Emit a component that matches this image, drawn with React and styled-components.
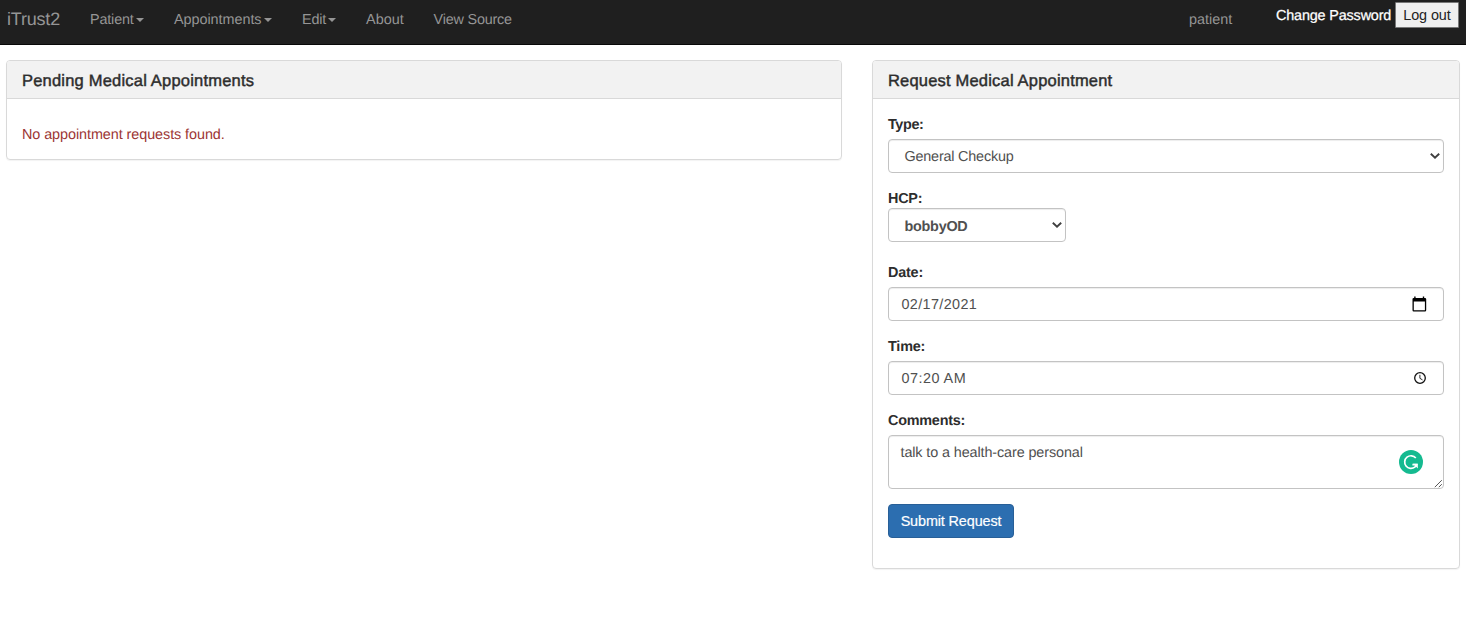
import React from "react";
import styled, { createGlobalStyle } from "styled-components";

const GlobalStyle = createGlobalStyle`
  *, *::before, *::after { box-sizing: border-box; }
  body {
    margin: 0;
    background: #fff;
    color: #2d2d2d;
    font-family: "Liberation Sans", Arial, sans-serif;
    font-size: 14.4px;
    line-height: 22px;
    overflow: hidden;
    text-rendering: geometricPrecision;
  }
`;

const Navbar = styled.nav`
  display: flex;
  align-items: flex-start;
  height: 45px;
  padding: 0 7px;
  background: #1f1f1f;
  border-bottom: 1px solid #080808;
  color: #959595;
  white-space: nowrap;
`;

const Brand = styled.a`
  width: 68px;
  padding-top: 8px;
  font-size: 18px;
  letter-spacing: ${(p) => p.$track || 0}px;
`;

const NavItem = styled.a`
  display: flex;
  align-items: center;
  width: ${(p) => p.$width}px;
  padding: 9px 0 0 15px;
  letter-spacing: ${(p) => p.$track || 0}px;
`;

const Caret = styled.i`
  margin: -1px 0 0 2px;
  border-top: 4px solid currentColor;
  border-left: 4px solid transparent;
  border-right: 4px solid transparent;
`;

const Account = styled.div`
  display: flex;
  align-items: flex-start;
  margin-left: auto;
`;

const UserName = styled.span`
  width: 87px;
  padding-top: 9px;
  letter-spacing: ${(p) => p.$track || 0}px;
`;

const PasswordLink = styled.a`
  width: 119px;
  padding-top: 5px;
  color: #fff;
  letter-spacing: ${(p) => p.$track || 0}px;
  -webkit-text-stroke: 0.25px currentColor;
`;

const LogoutButton = styled.button`
  width: 64px;
  height: 26px;
  margin-top: 2px;
  padding: 0;
  border: 1px solid #777;
  border-radius: 1px;
  background: #efefef;
  color: #222;
  font: inherit;
  letter-spacing: ${(p) => p.$track || 0}px;
`;

const Columns = styled.main`
  display: grid;
  grid-template-columns: 836px 588px;
  gap: 30px;
  align-items: start;
  padding: 15px 6px;
`;

const Panel = styled.section`
  height: ${(p) => p.$height}px;
  border: 1px solid #d9d9d9;
  border-radius: 4px;
  box-shadow: 0 1px 1px rgba(0, 0, 0, 0.05);
  overflow: hidden;
`;

const PanelTitle = styled.h3`
  height: 38px;
  margin: 0;
  padding: 10px 15px 0;
  border-bottom: 1px solid #d9d9d9;
  background: #f2f2f2;
  font-size: 16.5px;
  font-weight: 400;
  line-height: 20px;
  letter-spacing: ${(p) => p.$track || 0}px;
  -webkit-text-stroke: 0.45px currentColor;
`;

const EmptyMessage = styled.p`
  margin: 25px 15px 0;
  color: #9c3534;
  letter-spacing: ${(p) => p.$track || 0}px;
`;

const Form = styled.form`
  display: flex;
  flex-direction: column;
  align-items: flex-start;
  padding: 15px;
`;

const Group = styled.div`
  width: 100%;
  height: ${(p) => p.$height || 74}px;
`;

const Label = styled.label`
  display: block;
  height: ${(p) => (p.$tight ? 20 : 25)}px;
  font-weight: 700;
  letter-spacing: ${(p) => p.$track || 0}px;
`;

const Field = styled.div`
  display: flex;
  align-items: ${(p) => (p.$tall ? "flex-start" : "center")};
  justify-content: space-between;
  position: relative;
  width: ${(p) => p.$width || "100%"};
  height: ${(p) => (p.$tall ? 54 : 34)}px;
  padding: ${(p) => p.$pad};
  border: 1px solid #c3c3c3;
  border-radius: 4px;
  background: #fff;
  box-shadow: inset 0 1px 1px rgba(0, 0, 0, 0.075);
  color: #505050;
  font-weight: ${(p) => (p.$bold ? 700 : 400)};
`;

const Value = styled.span`
  padding-top: 2px;
  letter-spacing: ${(p) => p.$track || 0}px;
`;

const Grip = styled.svg`
  position: absolute;
  right: 0;
  bottom: 0;
`;

const AssistantBadge = styled.span`
  display: flex;
  margin-top: 10px;
`;

const SubmitButton = styled.button`
  width: 126px;
  height: 34px;
  padding: 0;
  border: 1px solid #285f97;
  border-radius: 4px;
  background: #2c6eb0;
  color: #fff;
  font: inherit;
  letter-spacing: ${(p) => p.$track || 0}px;
  -webkit-text-stroke: 0.2px currentColor;
`;

const ChevronMark = styled.svg`
  margin-bottom: ${(p) => p.$lift || 0}px;
`;

const Chevron = ({ lift }) => (
  <ChevronMark $lift={lift} width="10" height="6" viewBox="0 0 10 6" fill="none" stroke="#404040" strokeWidth="1.9">
    <path d="M0.8 0.8 5 4.7 9.2 0.8" />
  </ChevronMark>
);

const CalendarIcon = () => (
  <svg width="15" height="16" viewBox="0 0 15 16">
    <path
      fill="#000"
      fillRule="evenodd"
      d="M2.2 .5h1.4v1.4h7.2V.5h1.4v1.4h.8A1.2 1.2 0 0 1 14.2 3.1v11.2a1.2 1.2 0 0 1-1.2 1.2H1.7A1.2 1.2 0 0 1 .5 14.3V3.1a1.2 1.2 0 0 1 1.2-1.2h.5zM1.8 5.5v8.7h11.1V5.5z"
    />
  </svg>
);

const ClockIcon = () => (
  <svg width="12" height="12" viewBox="0 0 12 12" fill="none" stroke="#111">
    <circle cx="6" cy="6" r="5.3" strokeWidth="1.3" />
    <path d="M5.9 2.8v3.5l2.6 1.6" strokeWidth="0.9" />
  </svg>
);

const AssistantIcon = () => (
  <svg width="24" height="24" viewBox="0 0 24 24" fill="none">
    <circle cx="12" cy="12" r="12" fill="#15ba90" />
    <path
      d="M16.8 8A6.3 6.3 0 1 0 15.8 17.1Q17.3 16 17.6 14.6H13.4"
      stroke="#fff"
      strokeWidth="1.7"
    />
    <path d="M14 13.7h4.8v4.9z" fill="#fff" />
  </svg>
);

export default function App() {
  return (
    <>
      <GlobalStyle />
      <Navbar>
        <Brand $track={-0.2}>iTrust2</Brand>
        <NavItem $width={84} $track={-0.16}>Patient<Caret /></NavItem>
        <NavItem $width={128} $track={-0.04}>Appointments<Caret /></NavItem>
        <NavItem $width={64} $track={-0.16}>Edit<Caret /></NavItem>
        <NavItem $width={67.5} $track={0.03}>About</NavItem>
        <NavItem $width={110} $track={-0.19}>View Source</NavItem>
        <Account>
          <UserName $track={0.01}>patient</UserName>
          <PasswordLink $track={-0.16}>Change Password</PasswordLink>
          <LogoutButton type="button" $track={-0.09}>Log out</LogoutButton>
        </Account>
      </Navbar>
      <Columns>
        <Panel $height={100}>
          <PanelTitle $track={0.2}>Pending Medical Appointments</PanelTitle>
          <EmptyMessage $track={-0.07}>No appointment requests found.</EmptyMessage>
        </Panel>
        <Panel $height={509}>
          <PanelTitle $track={0.19}>Request Medical Appointment</PanelTitle>
          <Form>
            <Group>
              <Label $track={-0.35}>Type:</Label>
              <Field $pad="0 3px 0 15.5px">
                <Value $track={-0.2}>General Checkup</Value>
                <Chevron />
              </Field>
            </Group>
            <Group>
              <Label $tight $track={-0.25}>HCP:</Label>
              <Field $width="178px" $pad="1px 3px 0 15.5px" $bold>
                <Value $track={-0.25}>bobbyOD</Value>
                <Chevron lift={2} />
              </Field>
            </Group>
            <Group>
              <Label $track={-0.2}>Date:</Label>
              <Field $pad="0 16px 0 12.5px">
                <Value $track={0.36}>02/17/2021</Value>
                <CalendarIcon />
              </Field>
            </Group>
            <Group>
              <Label $track={-0.2}>Time:</Label>
              <Field $pad="0 17px 0 12.5px">
                <Value $track={0.48}>07:20 AM</Value>
                <ClockIcon />
              </Field>
            </Group>
            <Group $height={94}>
              <Label $track={-0.23}>Comments:</Label>
              <Field $tall $pad="4px 20px 0 11.5px">
                <Value $track={-0.11}>talk to a health-care personal</Value>
                <AssistantBadge>
                  <AssistantIcon />
                </AssistantBadge>
                <Grip width="9" height="9" viewBox="0 0 9 9" stroke="#444" strokeWidth="0.9">
                  <path d="M0.8 8.2 7.8 1.2M4.8 8.2 7.8 5.2" />
                </Grip>
              </Field>
            </Group>
            <SubmitButton type="button" $track={-0.12}>Submit Request</SubmitButton>
          </Form>
        </Panel>
      </Columns>
    </>
  );
}
